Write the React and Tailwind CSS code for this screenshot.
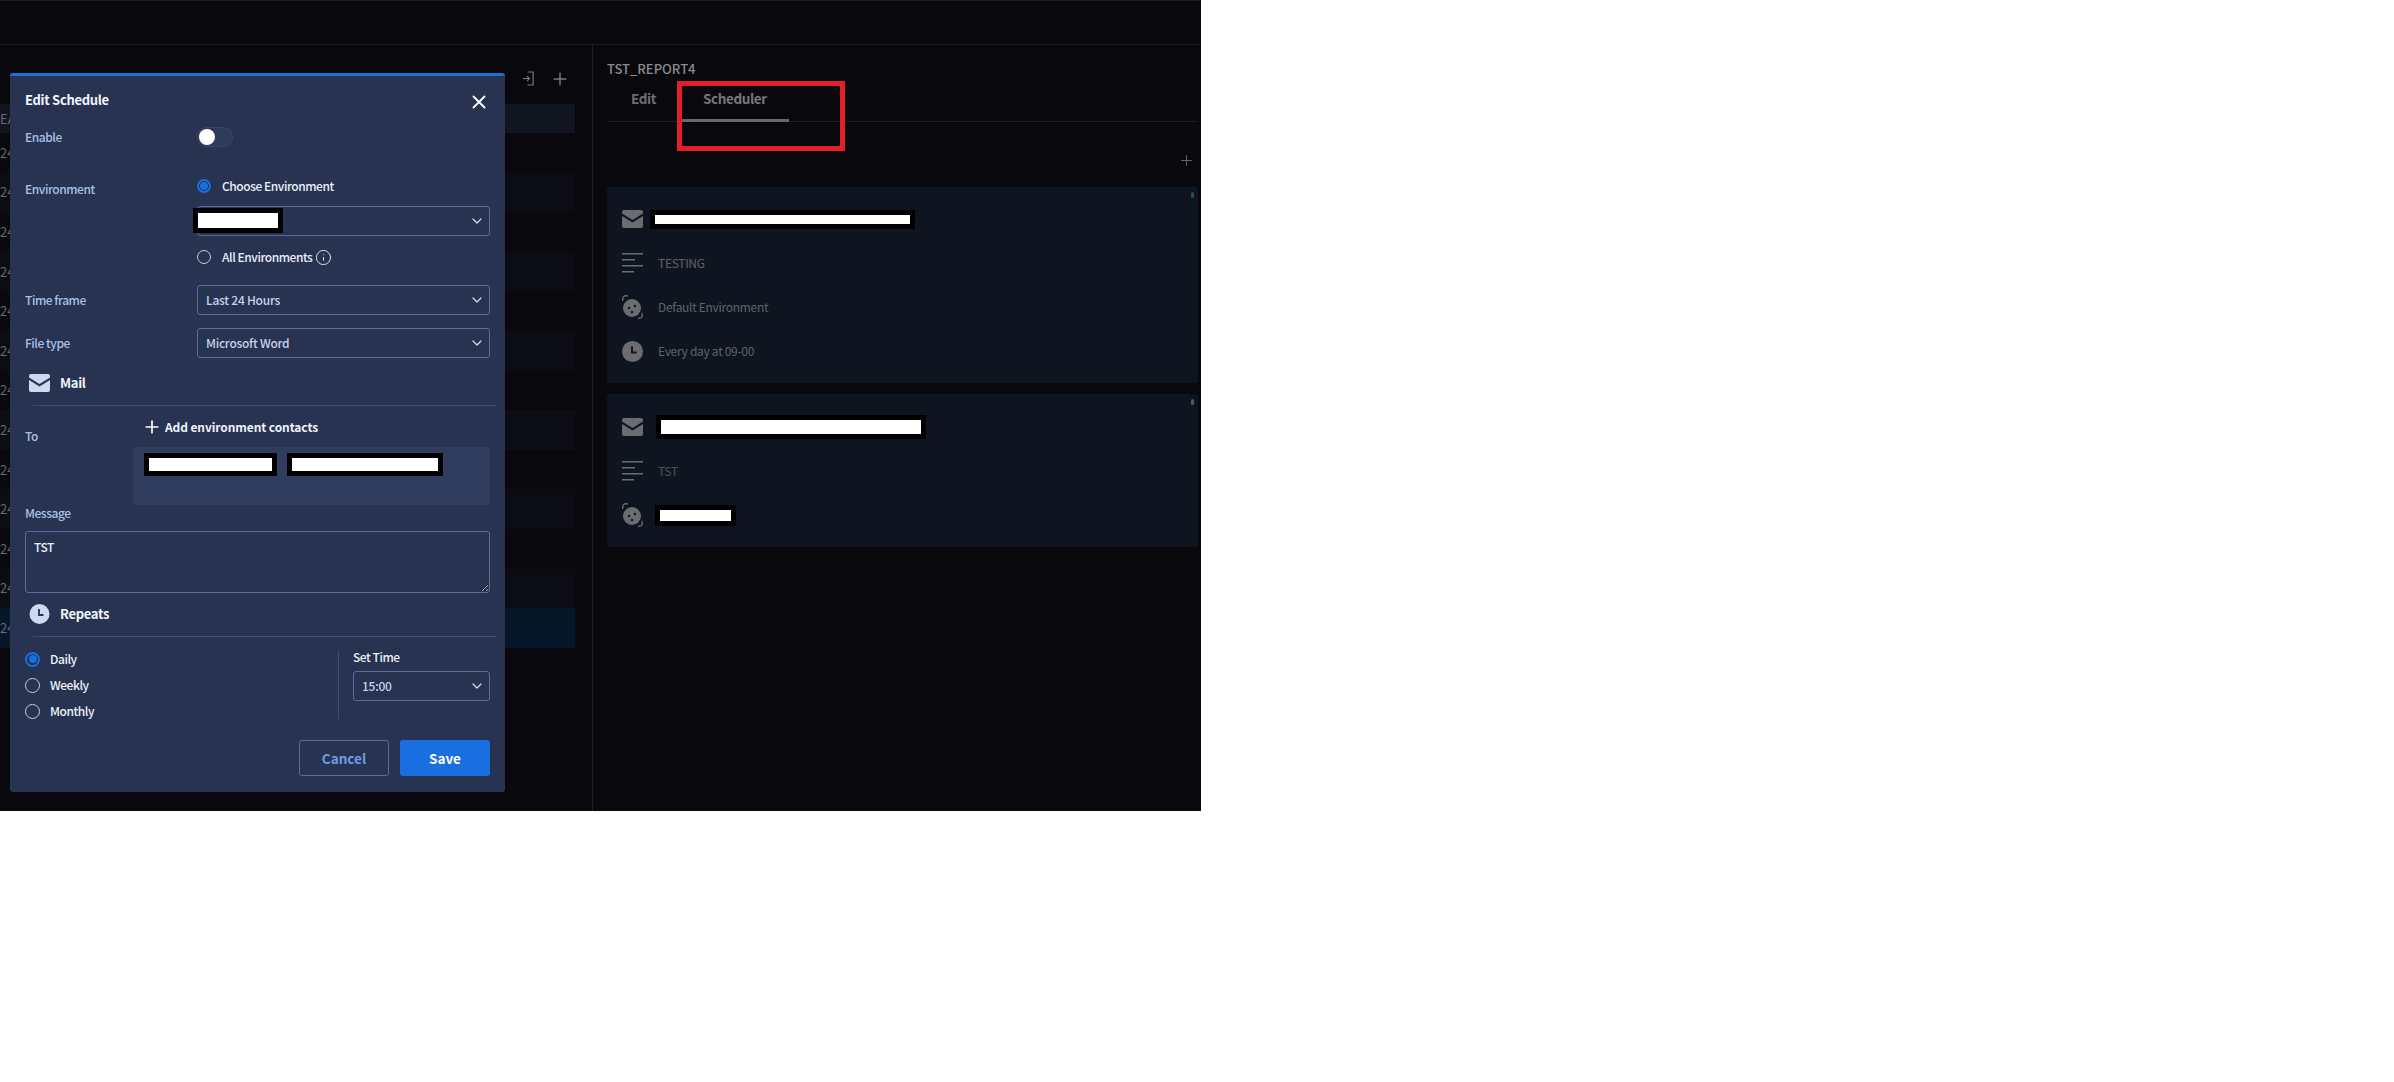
import { ChevronDown, Info, Plus, X } from "lucide-react";

const leftRows = [
  "", "faint", "", "faint", "", "faint", "", "faint", "", "faint", "", "faint", "selected",
];

const MailIcon = ({ className }) => (
  <svg viewBox="0 0 21 18" className={className}>
    <path d="M2 0h17a2 2 0 0 1 2 2v1.500l-10.500 6.500L0 3.500V2a2 2 0 0 1 2-2z" fill="currentColor" />
    <path d="M0 6l10.500 6.500L21 6v10a2 2 0 0 1-2 2H2a2 2 0 0 1-2-2z" fill="currentColor" />
  </svg>
);

const ClockIcon = ({ className, hand }) => (
  <svg viewBox="0 0 20 20" className={className}>
    <circle cx="10" cy="10" r="10" fill="currentColor" />
    <path d="M9.500 5v6h4.500" fill="none" stroke={hand} strokeWidth="1.800" />
  </svg>
);

const LinesIcon = ({ className }) => (
  <svg viewBox="0 0 21 20" className={className} fill="currentColor">
    <rect x="0" y="0" width="21" height="1.500" />
    <rect x="0" y="6" width="13" height="1.500" />
    <rect x="0" y="12" width="21" height="1.500" />
    <rect x="0" y="18" width="12" height="1.500" />
  </svg>
);

const EnvIcon = ({ className, eye }) => (
  <svg viewBox="0 0 21 26" className={className}>
    <circle cx="10" cy="14" r="9" fill="currentColor" />
    <circle cx="7" cy="14" r="1.300" fill={eye} />
    <circle cx="13" cy="12" r="1.300" fill={eye} />
    <circle cx="10" cy="18" r="1.300" fill={eye} />
    <path d="M1 7C0 3 2 1 6 2M20 19c1 4-1 6-4 5" fill="none" stroke="currentColor" strokeWidth="1.300" />
  </svg>
);

const Redaction = ({ className }) => (
  <div className={`border-[5px] border-black bg-white ${className}`} />
);

const Radio = ({ checked, size = "w-[14px] h-[14px]" }) => (
  <span
    className={`flex items-center justify-center rounded-full border shrink-0 ${size} ${
      checked ? "border-[#1a6fe0] border-2" : "border-[#c3cee6]"
    }`}
  >
    {checked ? <span className="w-[8px] h-[8px] rounded-full bg-[#1a6fe0]" /> : null}
  </span>
);

const Select = ({ value, className = "" }) => (
  <div
    className={`flex items-center justify-between h-[30px] pl-2 pr-[3px] rounded-[3px] border border-[#5c6b9c] text-[12px] tracking-[-0.25px] text-[#c5d2ec] ${className}`}
  >
    <span>{value}</span>
    <ChevronDown size={16} strokeWidth={1.800} className="text-[#d5def2] mr-[1px]" />
  </div>
);

const Field = ({ label, children }) => (
  <div className="grid grid-cols-[172px_1fr] items-center">
    <span className="text-[#a9c0e6]">{label}</span>
    {children}
  </div>
);

const SectionHead = ({ icon, title }) => (
  <div className="flex items-center h-[20px] pl-[4px]">
    <span className="w-[31px] flex">{icon}</span>
    <span className="text-[13px] tracking-[-0.3px] font-semibold text-[#f0f4fb]">{title}</span>
  </div>
);

const CardRow = ({ icon, children }) => (
  <div className="flex items-center h-[28px]">
    <span className="w-[36px] flex text-[#6b6c6f]">{icon}</span>
    {children}
  </div>
);

const EditScheduleModal = () => (
  <div className="absolute left-[10px] top-[73px] w-[495px] h-[719px] px-[15px] rounded-[3px] border-t-[3px] border-[#1a6fe0] bg-[#273350] text-[12px] font-medium tracking-[-0.45px] leading-[16px] text-[#e8eefa]">
    <div className="flex items-center justify-between h-[24px] mt-[12px]">
      <span className="text-[13px] tracking-[-0.3px] font-semibold text-[#f2f5fb]">Edit Schedule</span>
      <X size={22} strokeWidth={2} className="text-white mt-[3px]" />
    </div>

    <div className="mt-[15px]">
      <Field label="Enable">
        <div className="flex items-center w-[36px] h-[20px] pl-[1px] rounded-full border border-[#36456a] bg-[#2c3a5c]">
          <span className="w-[16px] h-[16px] rounded-full bg-white" />
        </div>
      </Field>
    </div>

    <div className="grid grid-cols-[172px_1fr] mt-[31px]">
      <span className="text-[#a9c0e6] mt-[3px]">Environment</span>
      <div className="flex flex-col">
        <div className="flex items-center gap-[11px] h-[16px]">
          <Radio checked />
          <span className="text-[#e8eefa]">Choose Environment</span>
        </div>
        <div className="relative mt-[12px]">
          <Select value="" />
          <Redaction className="absolute -left-[4px] top-[2px] w-[90px] h-[25px]" />
        </div>
        <div className="flex items-center gap-[11px] h-[16px] mt-[13px]">
          <Radio />
          <span className="flex items-center gap-[3px]">
            All Environments <Info size={17} strokeWidth={1.300} />
          </span>
        </div>
      </div>
    </div>

    <div className="mt-[20px]">
      <Field label="Time frame">
        <Select value="Last 24 Hours" />
      </Field>
    </div>
    <div className="mt-[13px]">
      <Field label="File type">
        <Select value="Microsoft Word" />
      </Field>
    </div>

    <div className="mt-[15px]">
      <SectionHead icon={<MailIcon className="w-[21px] h-[18px] text-[#cdd9f0]" />} title="Mail" />
    </div>
    <div className="ml-[8px] -mr-[7px] mt-[12px] border-t border-[#3f4d73]" />

    <div className="grid grid-cols-[108px_1fr] mt-[13px]">
      <span className="text-[#a9c0e6] mt-[9px]">To</span>
      <div className="flex flex-col">
        <div className="flex items-center h-[16px] pl-[9px] gap-[3px] font-semibold tracking-[-0.1px] text-[#eef2fa]">
          <Plus size={20} strokeWidth={2} className="text-white" />
          Add environment contacts
        </div>
        <div className="flex items-start gap-[10px] h-[58px] mt-[12px] pl-[11px] pt-[6px] rounded-[2px] bg-[#303c5e]">
          <Redaction className="w-[133px] h-[23px]" />
          <Redaction className="w-[156px] h-[23px]" />
        </div>
      </div>
    </div>

    <div className="text-[#a9c0e6]">Message</div>
    <textarea
      defaultValue="TST"
      className="block w-full h-[62px] mt-[10px] px-2 py-[7px] rounded-[3px] border border-[#5c6b9c] bg-transparent text-[12px] text-[#e8eefa] outline-none"
    />

    <div className="mt-[11px]">
      <SectionHead icon={<ClockIcon className="w-[21px] h-[20px] text-[#cdd9f0]" hand="#273350" />} title="Repeats" />
    </div>
    <div className="ml-[8px] -mr-[7px] mt-[12px] border-t border-[#3f4d73]" />

    <div className="flex mt-[14px] h-[68px]">
      <div className="flex flex-col gap-[10px] w-[313px]">
        {["Daily", "Weekly", "Monthly"].map((item, i) => (
          <div key={item} className="flex items-center gap-[10px] h-[16px]">
            <Radio checked={i === 0} size="w-[15px] h-[15px]" />
            <span className="text-[#eef2fa]">{item}</span>
          </div>
        ))}
      </div>
      <div className="flex-1 pl-[14px] border-l border-[#3f4d73]">
        <div className="leading-[12px] text-[#e8eefa]">Set Time</div>
        <Select value="15:00" className="mt-[8px]" />
      </div>
    </div>

    <div className="flex justify-end gap-[11px] mt-[21px]">
      <button className="w-[90px] h-[36px] rounded-[3px] border border-[#5c6b9c] text-[13.500px] tracking-normal font-semibold text-[#6f9ce8]">
        Cancel
      </button>
      <button className="w-[90px] h-[36px] rounded-[3px] bg-[#1a6fe0] text-[13.500px] tracking-normal font-semibold text-white">
        Save
      </button>
    </div>
  </div>
);

const App = () => {
  return (
    <div
      className="relative w-[1201px] h-[811px] bg-[#08080d] overflow-hidden text-[13px] leading-[16px]"
      style={{ fontFamily: '"Noto Sans CJK SC", "Noto Sans", sans-serif' }}
    >
      <div className="h-[45px] border-t border-b border-[#1b1d25]" />
      <div className="flex h-[766px]">
        <div className="w-[593px] border-r border-[#1b1d25]">
          <div className="flex justify-end items-center h-[59px] pt-[8px] pr-[22px] gap-[15px] text-[#77787c]">
            <svg viewBox="0 0 14 16" className="w-[13px] h-[15px]" fill="none" stroke="currentColor" strokeWidth="1.300">
              <path d="M6 1h6v14H6M1 8h7M5.500 5.500L8 8l-2.500 2.500" />
            </svg>
            <Plus size={20} strokeWidth={1.800} />
          </div>
          <div className="w-[575px]">
            <div className="h-[29px] flex items-center bg-[#10151f] text-[#6a6a6e]">EAT</div>
            {leftRows.map((row, i) => (
              <div key={i} className="flex flex-col">
                <div
                  className={`flex items-center h-[39.600px] text-[#6a6a6e] ${
                    row === "faint" ? "bg-[#0c0d14]" : row === "selected" ? "bg-[#06172a]" : ""
                  }`}
                >
                  24
                </div>
              </div>
            ))}
          </div>
        </div>

        <div className="flex-1 pl-[14px] pr-[3px] pt-[16px]">
          <div className="h-[16px] text-[13px] font-medium text-[#8b8b8e]">TST_REPORT4</div>
          <div className="flex h-[40px] mt-[5px] border-b border-[#1b1d25] text-[13.500px] tracking-[-0.4px] font-semibold">
            <div className="w-[75px] pl-[24px] pt-[8px] text-[#6e6f72]">Edit</div>
            <div className="w-[107px] h-[40px] pl-[21px] pt-[8px] border-b-[3px] border-[#67686b] text-[#77787c]">
              Scheduler
            </div>
          </div>
          <div className="flex justify-end h-[47px] items-end mr-[3px] text-[#6b6c6f]">
            <Plus size={17} strokeWidth={1.300} />
          </div>

          <div className="relative h-[196px] mt-[18px] pl-[15px] pt-[18px] rounded-[3px] bg-[#0f1520] text-[12px] tracking-[-0.3px] text-[#5f6369]">
            <span className="absolute right-[4px] top-[5px] w-[3px] h-[6px] rounded-full bg-[#2a4a55]" />
            <div className="flex flex-col gap-[16px]">
              <CardRow icon={<MailIcon className="w-[21px] h-[18px]" />}>
                <Redaction className="-ml-[8px] w-[265px] h-[19px]" />
              </CardRow>
              <CardRow icon={<LinesIcon className="w-[21px] h-[20px]" />}>TESTING</CardRow>
              <CardRow icon={<EnvIcon className="w-[21px] h-[26px]" eye="#0f1520" />}>Default Environment</CardRow>
              <CardRow icon={<ClockIcon className="w-[21px] h-[21px]" hand="#0f1520" />}>Every day at 09-00</CardRow>
            </div>
          </div>

          <div className="relative h-[153px] mt-[11px] pl-[15px] pt-[19px] rounded-[3px] bg-[#0f1520] text-[12px] tracking-[-0.3px] text-[#4a5058]">
            <span className="absolute right-[4px] top-[5px] w-[3px] h-[6px] rounded-full bg-[#55585c]" />
            <div className="flex flex-col gap-[16px]">
              <CardRow icon={<MailIcon className="w-[21px] h-[18px]" />}>
                <Redaction className="-ml-[2px] w-[270px] h-[24px]" />
              </CardRow>
              <CardRow icon={<LinesIcon className="w-[21px] h-[20px]" />}>TST</CardRow>
              <CardRow icon={<EnvIcon className="w-[21px] h-[26px]" eye="#0f1520" />}>
                <Redaction className="-ml-[3px] w-[81px] h-[21px]" />
              </CardRow>
            </div>
          </div>
        </div>
      </div>

      <EditScheduleModal />
      <div className="absolute left-[677px] top-[81px] w-[168px] h-[70px] border-[5px] border-[#e01f26]" />
    </div>
  );
};

export default App;
